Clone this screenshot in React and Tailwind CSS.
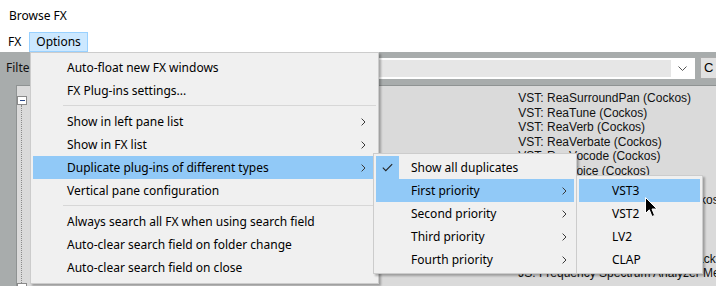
import React from "react";

const Chevron = () => (
  <svg width="5" height="8" viewBox="0 0 5 8" className="block shrink-0">
    <path d="M0.6 0.6 L4 4 L0.6 7.4" fill="none" stroke="#3a3a3a" strokeWidth="1" />
  </svg>
);

const Check = () => (
  <svg width="11" height="9" viewBox="0 0 11 9" className="block">
    <path d="M0.8 4.6 L3.8 7.6 L10.2 1.2" fill="none" stroke="#222" strokeWidth="1.1" />
  </svg>
);

const Sep = () => (
  <div className="pt-[3px] pb-[4px] pl-[30px]">
    <div className="h-px bg-[#d7d7d7]" />
  </div>
);

function Item({ label, arrow, hi, pl = "pl-[34px]", pr = "pr-[10px]" }) {
  return (
    <div
      className={`h-[23px] flex items-center ${pl} ${pr} ${hi ? "bg-[#91c9f7]" : ""}`}
    >
      <span className="flex-1 whitespace-nowrap">{label}</span>
      {arrow && <Chevron />}
    </div>
  );
}

const listLines = [
  "VST: ReaSurroundPan (Cockos)",
  "VST: ReaTune (Cockos)",
  "VST: ReaVerb (Cockos)",
  "VST: ReaVerbate (Cockos)",
  "VST: ReaVocode (Cockos)",
  "VST: ReaVoice (Cockos)",
  "VST: ReaXcomp (Cockos)",
  "VSTi: ReaSamplOmatic5000 (Cockos)",
  "VSTi: ReaSynDr (Cockos)",
  "VSTi: ReaSynth (Cockos)",
  "JS: 3-Band Splitter",
  "JS: Floaty Delay w/ Stereo Feedback",
  "JS: Frequency Spectrum Analyzer Meter",
];

export default function App() {
  return (
    <div className="relative w-[716px] h-[286px] overflow-hidden bg-[#a8acac] font-['Noto_Sans',sans-serif] text-[12px] text-black">
      {/* title bar */}
      <div className="h-[32px] bg-white flex items-center pl-[9px]">Browse FX</div>
      {/* menu bar */}
      <div className="h-[20px] bg-white flex items-stretch">
        <div className="pl-[8px] pr-[8px] flex items-center">FX</div>
        <div className="px-[6px] flex items-center bg-[#cce8ff] border border-[#99d1ff]">Options</div>
      </div>
      {/* content */}
      <div className="flex flex-col w-[770px]">
        <div className="h-[32px] flex items-center">
          <span className="pl-[6px] pr-[8px] text-[#111]">Filter</span>
          <div className="flex-1 h-[21px] bg-white p-[2px] flex">
            <div className="flex-1 bg-[#e6e6e6]" />
            <div className="w-[22px] flex items-center justify-center">
              <svg width="9" height="5" viewBox="0 0 9 5"><path d="M0.5 0.5 L4.5 4.5 L8.5 0.5" fill="none" stroke="#555" strokeWidth="1" /></svg>
            </div>
          </div>
          <div className="ml-[5px] w-[70px] h-[22px] bg-[#e1e1e1] border border-[#adadad] flex items-center pl-[3px] font-['Liberation_Sans',sans-serif] text-[13px]">C</div>
        </div>
        <div className="flex h-[210px] mt-[1px] ml-[16px] bg-[#dadada] border-l border-t border-[#8f9393]">
          <div className="w-[494px] relative">
            <div className="absolute left-[0px] top-[10px] w-[10px] h-[9px] bg-white border border-[#8a8a8a] flex items-center justify-center">
              <div className="w-[5px] h-px bg-[#2b4a8c]" />
            </div>
            <div className="absolute left-[4px] top-[19px] h-[178px] border-l border-dotted border-[#8a8a8a]" />
            <div className="absolute left-[0px] top-[197px] w-[10px] h-[9px] bg-white border border-[#8a8a8a]" />
          </div>
          <div className="w-[260px] pl-[8px] pt-[5px] font-['Liberation_Sans',sans-serif] text-[12px] leading-[14.6px] text-[#111]">
            {listLines.map((l) => (
              <div key={l} className="whitespace-nowrap">{l}</div>
            ))}
          </div>
        </div>
      </div>

      {/* Options menu */}
      <div className="absolute left-[30px] top-[52px] w-[349px] bg-[#f0f0f0] border border-[#cccccc] px-[2px] pt-[3px] pb-[4px] shadow-[2px_2px_2px_rgba(0,0,0,0.28)]">
        <Item label="Auto-float new FX windows" />
        <Item label="FX Plug-ins settings..." />
        <Sep />
        <Item label="Show in left pane list" arrow />
        <Item label="Show in FX list" arrow />
        <Item label="Duplicate plug-ins of different types" arrow hi />
        <Item label="Vertical pane configuration" />
        <Sep />
        <Item label="Always search all FX when using search field" />
        <Item label="Auto-clear search field on folder change" />
        <Item label="Auto-clear search field on close" />
      </div>

      {/* Submenu 1 */}
      <div className="absolute left-[373px] top-[153px] w-[204px] bg-[#f0f0f0] border border-[#cccccc] p-[2px] shadow-[2px_2px_2px_rgba(0,0,0,0.28)]">
        <div className="h-[23px] flex items-center">
          <div className="w-[23px] h-[23px] bg-[#91c9f7] flex items-center justify-center">
            <Check />
          </div>
          <span className="pl-[12px] whitespace-nowrap">Show all duplicates</span>
        </div>
        <Item label="First priority" arrow hi pl="pl-[35px]" pr="pr-[7px]" />
        <Item label="Second priority" arrow pl="pl-[35px]" pr="pr-[7px]" />
        <Item label="Third priority" arrow pl="pl-[35px]" pr="pr-[7px]" />
        <Item label="Fourth priority" arrow pl="pl-[35px]" pr="pr-[7px]" />
      </div>

      {/* Submenu 2 */}
      <div className="absolute left-[576px] top-[175px] w-[127px] bg-[#f0f0f0] border border-[#cccccc] px-[2px] pt-[3px] pb-[2px] shadow-[2px_2px_2px_rgba(0,0,0,0.28)]">
        <Item label="VST3" hi pl="pl-[33px]" />
        <Item label="VST2" pl="pl-[33px]" />
        <Item label="LV2" pl="pl-[33px]" />
        <Item label="CLAP" pl="pl-[33px]" />
      </div>

      {/* cursor */}
      <svg className="absolute left-[645px] top-[197px]" width="13" height="21" viewBox="0 0 13 21">
        <path d="M0.5 0.5 L0.5 16.5 L4.3 12.8 L7 19.5 L9.6 18.4 L7 12 L12 12 Z" fill="#000" stroke="#fff" strokeWidth="1" strokeLinejoin="round" />
      </svg>
    </div>
  );
}
